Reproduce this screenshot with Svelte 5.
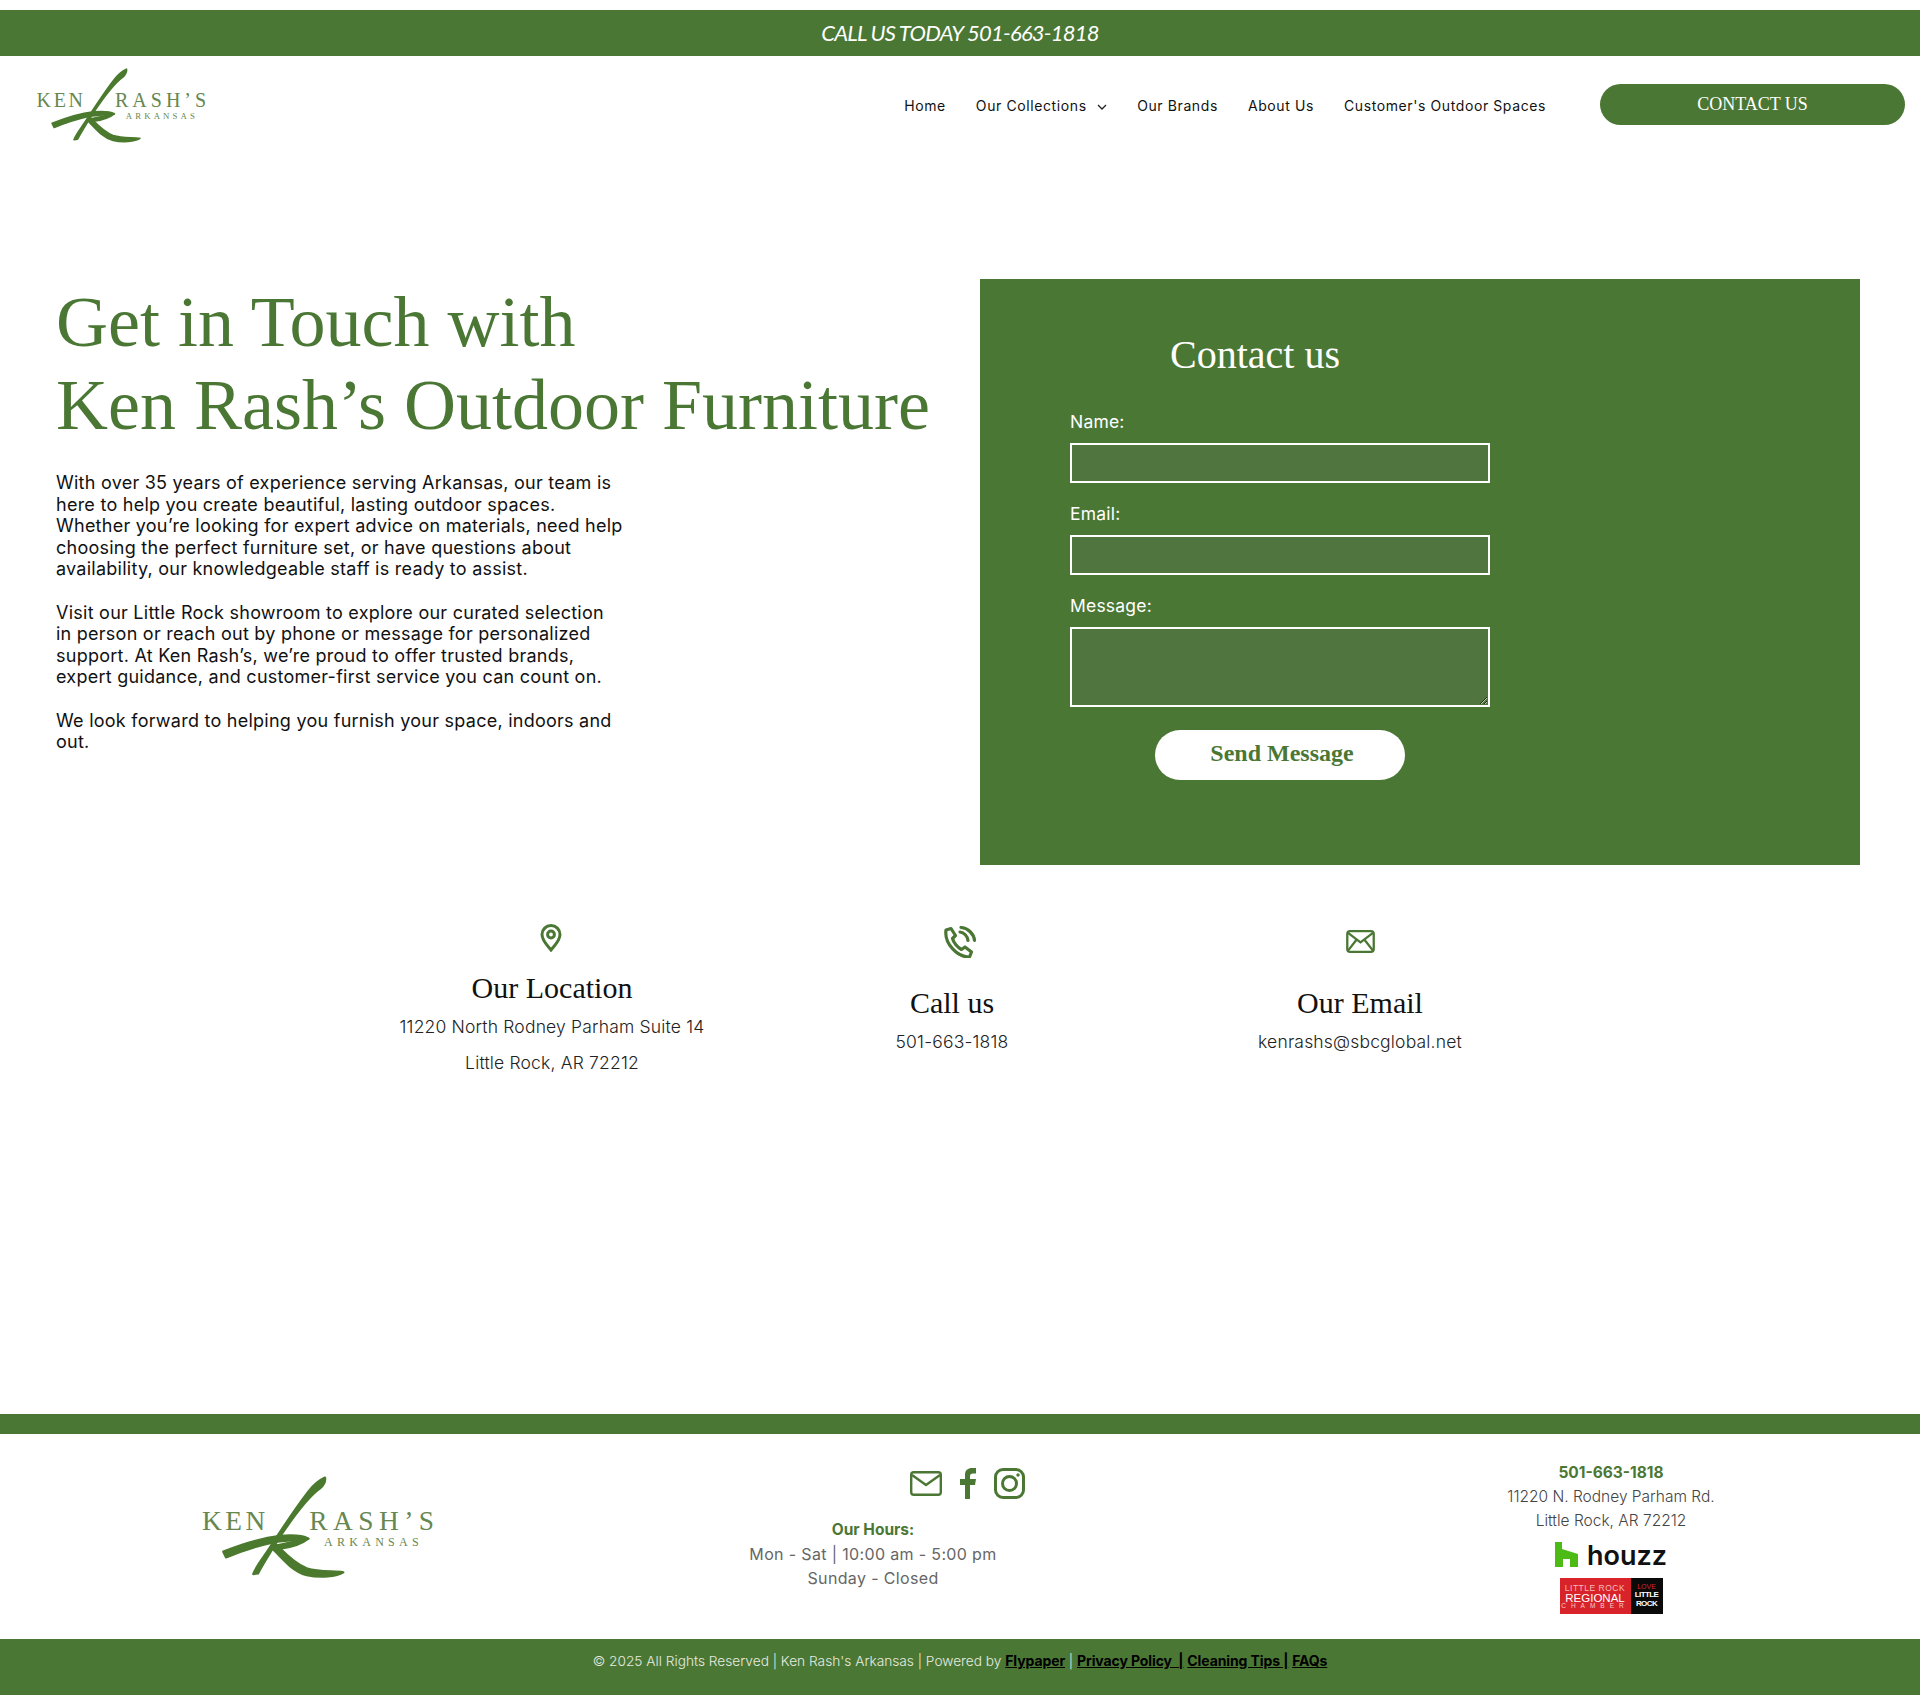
<script>
  const paragraphs = [
    'With over 35 years of experience serving Arkansas, our team is here to help you create beautiful, lasting outdoor spaces. Whether you’re looking for expert advice on materials, need help choosing the perfect furniture set, or have questions about availability, our knowledgeable staff is ready to assist.',
    'Visit our Little Rock showroom to explore our curated selection in\u00a0person or reach out by phone or message for personalized support. At Ken Rash’s, we’re proud to offer trusted brands, expert guidance, and customer-first service you can count on.',
    'We look forward to helping you furnish your space, indoors and out.'
  ]
  const navItems = ['Our Brands', 'About Us', "Customer's Outdoor Spaces"]
</script>

{#snippet logo(cls)}
  <svg class={cls} viewBox="60 78 705 312" role="img" aria-label="Ken Rash's Arkansas">
    <text x="66" y="240" font-size="82" textLength="190" class="logo-text">KEN</text>
    <text x="388" y="240" font-size="82" textLength="374" class="logo-text">RASH’S</text>
    <text x="432" y="287" font-size="36" textLength="284" class="logo-text">ARKANSAS</text>
    <g fill="#4b7a2f" stroke="#4b7a2f" stroke-width="7" stroke-linejoin="round">
      <path d="M435 83C420 90 403 102 385 125C350 170 310 230 265 300C245 330 228 350 220 372L234 370C250 340 275 300 300 260C340 200 385 140 420 115C428 108 437 95 435 83Z" />
      <path d="M130 305C180 285 240 265 300 258C335 255 365 255 385 266C360 272 320 268 280 277C230 288 180 305 138 322Z" />
      <path d="M385 266C365 282 335 292 300 296L285 288Z" />
      <path d="M290 285C310 305 340 340 380 355C420 368 460 362 490 367C470 380 420 384 380 375C340 365 310 330 280 298Z" />
    </g>
  </svg>
{/snippet}

<div class="page">
  <div class="topbar">CALL US TODAY 501-663-1818</div>

  <header>
    {@render logo('logo-small')}
    <nav>
      <a href="#home">Home</a>
      <a href="#collections">Our Collections
        <svg class="caret" viewBox="0 0 10 6"><path d="M1 1l4 4 4-4" fill="none" stroke="#222" stroke-width="1.3" /></svg>
      </a>
      {#each navItems as item}
        <a href="#nav">{item}</a>
      {/each}
    </nav>
    <a class="contact-btn" href="#contact">CONTACT US</a>
  </header>

  <section class="hero">
    <div class="intro">
      <h1>Get in Touch with<br />Ken Rash’s Outdoor Furniture</h1>
      {#each paragraphs as p}
        <p>{p}</p>
      {/each}
    </div>

    <div class="panel">
      <form on:submit|preventDefault>
        <h2>Contact us</h2>
        <label for="name">Name:</label>
        <input id="name" type="text" />
        <label for="email">Email:</label>
        <input id="email" type="email" />
        <label for="message">Message:</label>
        <textarea id="message"></textarea>
        <button type="submit">Send Message</button>
      </form>
    </div>
  </section>

  <section class="info">
    <div class="info-col">
      <svg class="icon pin" viewBox="0 0 22 28" fill="none" stroke="#4b7735" stroke-width="3">
        <path d="M11 26C7 21 2 16.500 2 10.500a9 9 0 0 1 18 0C20 16.500 15 21 11 26Z" />
        <circle cx="11" cy="10.500" r="3.400" />
      </svg>
      <h3>Our Location</h3>
      <p>11220 North Rodney Parham Suite 14</p>
      <p>Little Rock, AR 72212</p>
    </div>
    <div class="info-col lower">
      <svg class="icon phone" viewBox="0 0 34 32" fill="none" stroke="#4b7735" stroke-width="3.200" stroke-linecap="round" stroke-linejoin="round">
        <path d="M3 4L8 2.500l4.500 7-3 3c1 4 5 9 9 11l3.500-2.500 6.500 5-2 5C15 31.500 1 18 3 4Z" />
        <path d="M17 6c4 .5 7.500 4 8 8.500" />
        <path d="M18 1.500C25 2 31 8 31.500 14.500" />
      </svg>
      <h3>Call us</h3>
      <p>501-663-1818</p>
    </div>
    <div class="info-col lower">
      <svg class="icon mail" viewBox="0 0 30 24" fill="none" stroke="#4b7735" stroke-width="2.400" stroke-linejoin="round">
        <rect x="1.200" y="1.200" width="27.600" height="21.600" rx="3" />
        <path d="M2 3l13 10L28 3M2 21.500L11 10M28 21.500L19 10" />
      </svg>
      <h3>Our Email</h3>
      <p>kenrashs@sbcglobal.net</p>
    </div>
  </section>

  <div class="band"></div>

  <footer>
    <div class="foot-logo">
      {@render logo('logo-large')}
    </div>
    <div class="foot-mid">
      <div class="socials">
        <svg class="s-mail" viewBox="0 0 32 25" fill="none" stroke="#4b7735" stroke-width="2.400" stroke-linejoin="round">
          <rect x="1.200" y="1.200" width="29.600" height="22.600" rx="2.500" />
          <path d="M2 4l14 10L30 4" />
        </svg>
        <svg class="s-fb" viewBox="0 0 16 31" fill="#4b7735">
          <path d="M5 31V17H0v-6h5V7c0-5 3-7 7-7h4v5.500h-3c-2 0-3 1-3 2.700V11h6l-1 6h-5v14Z" />
        </svg>
        <svg class="s-ig" viewBox="0 0 31 31" fill="none" stroke="#4b7735" stroke-width="3">
          <rect x="1.500" y="1.500" width="28" height="28" rx="7.500" />
          <circle cx="15.500" cy="15.500" r="7" />
          <circle cx="24" cy="7" r="1.700" fill="#4b7735" stroke="none" />
        </svg>
      </div>
      <div class="hours">
        <strong>Our Hours:</strong>
        <span>Mon - Sat | 10:00 am - 5:00 pm</span>
        <span>Sunday - Closed</span>
      </div>
    </div>
    <div class="foot-right">
      <strong>501-663-1818</strong>
      <span>11220 N. Rodney Parham Rd.</span>
      <span>Little Rock, AR 72212</span>
      <div class="houzz">
        <svg viewBox="0 0 23 25" fill="#4dbb16"><path d="M0 0h7v7l16 5v13h-8v-8H8v8H0Z" /></svg>
        <span>houzz</span>
      </div>
      <div class="chamber">
        <div class="red">
          <small>LITTLE ROCK</small>
          <b>REGIONAL</b>
          <small class="wide">CHAMBER</small>
        </div>
        <div class="black">
          <small class="love">LOVE</small>
          <b>LITTLE</b>
          <b>ROCK</b>
        </div>
      </div>
    </div>
  </footer>

  <div class="legal">
    © 2025 All Rights Reserved | Ken Rash's Arkansas | Powered by <a href="#fp">Flypaper</a> | <a href="#pp">Privacy Policy &nbsp;|</a> <a href="#ct">Cleaning Tips |</a> <a href="#faq">FAQs</a>
  </div>
</div>

<style>
  :global(body) {
    margin: 0;
    background: #fff;
  }

  .page {
    font-family: "Inter", "Open Sans", sans-serif;
    color: #000;
    padding-top: 10px;
  }

  .topbar {
    height: 46px;
    background: #4b7735;
    color: #fff;
    font-family: "Lato", sans-serif;
    font-style: italic;
    font-size: 22px;
    line-height: 46px;
    text-align: center;
    letter-spacing: -0.76px;
  }

  header {
    height: 104px;
    display: flex;
    align-items: center;
    padding: 0 15px 0 35px;
  }

  .logo-small {
    width: 172px;
    height: 76px;
    margin-top: -4px;
  }

  .logo-large {
    width: 235px;
    height: 104px;
    display: block;
  }

  .logo-text {
    font-family: "Liberation Serif", serif;
    fill: #66874f;
  }

  nav {
    margin-left: auto;
    display: flex;
    gap: 30px;
    font-size: 14px;
    letter-spacing: 0.6px;
    margin-top: -5px;
  }

  nav a {
    color: #111;
    text-decoration: none;
  }

  .caret {
    width: 10px;
    height: 6px;
    margin-left: 6px;
    vertical-align: 1px;
  }

  .contact-btn {
    margin-left: 54px;
    width: 305px;
    height: 41px;
    border-radius: 21px;
    background: #4b7735;
    color: #fff;
    font-family: "Liberation Serif", serif;
    font-size: 18px;
    line-height: 41px;
    text-align: center;
    text-decoration: none;
    margin-top: -8px;
  }

  .hero {
    display: flex;
    margin-top: 119px;
    padding: 0 60px 0 56px;
  }

  .intro {
    width: 924px;
    flex: none;
  }

  h1 {
    margin: 0 0 25px;
    padding-top: 2px;
    font-family: "Liberation Serif", serif;
    font-weight: 400;
    font-size: 72px;
    line-height: 83px;
    color: #4b7735;
  }

  .intro p {
    width: 575px;
    margin: 0 0 22px;
    font-size: 18px;
    letter-spacing: 0.25px;
    line-height: 21.500px;
    color: #111;
  }

  .panel {
    flex: 1;
    height: 586px;
    background: #4b7735;
    padding: 0 0 0 90px;
    box-sizing: border-box;
  }

  form {
    width: 420px;
    display: flex;
    flex-direction: column;
  }

  h2 {
    margin: 52px 50px 33px 0;
    font-family: "Liberation Serif", serif;
    font-weight: 400;
    font-size: 40px;
    line-height: 48px;
    text-align: center;
    color: #fff;
  }

  label {
    height: 31px;
    font-size: 17.500px;
    letter-spacing: 0.2px;
    line-height: 20px;
    color: #fff;
  }

  input,
  textarea {
    display: block;
    box-sizing: border-box;
    width: 420px;
    margin: 0 0 21px;
    border: 2px solid #fff;
    background: #50753e;
    padding: 4px;
  }

  input {
    height: 40px;
  }

  textarea {
    height: 80px;
    margin-bottom: 23px;
  }

  button {
    align-self: center;
    width: 250px;
    height: 50px;
    border: 0;
    border-radius: 25px;
    background: #fff;
    color: #4b7735;
    font-family: "Liberation Serif", serif;
    font-weight: 700;
    font-size: 24px;
    padding: 0 0 4px 4px;
  }

  .info {
    display: grid;
    grid-template-columns: 400px 400px 416px;
    padding: 59px 0 0 352px;
    height: 549px;
    box-sizing: border-box;
  }

  .info-col {
    display: flex;
    flex-direction: column;
    align-items: center;
    text-align: center;
  }

  .info-col.lower {
    padding-top: 2px;
  }

  .icon {
    display: block;
  }

  .pin {
    width: 22px;
    height: 28px;
    margin: 0 3px 18px 0;
  }

  .phone {
    width: 34px;
    height: 32px;
    margin: 0 0 27px 16px;
  }

  .mail {
    width: 29px;
    height: 23px;
    margin: 4px 0 32px;
  }

  h3 {
    margin: 0 0 3px;
    font-family: "Liberation Serif", serif;
    font-weight: 400;
    font-size: 30px;
    line-height: 36px;
    color: #111;
  }

  .info-col p {
    margin: 0;
    font-size: 17.500px;
    font-weight: 300;
    letter-spacing: 0.18px;
    line-height: 36px;
    color: #222;
  }

  .band {
    height: 20px;
    background: #4b7735;
  }

  footer {
    height: 205px;
    display: grid;
    grid-template-columns: 200px 235px 380px 300px 1fr;
    font-size: 15.500px;
  }

  .foot-logo {
    grid-column: 2;
    padding-top: 42px;
  }

  .foot-mid {
    grid-column: 3 / 5;
    padding-top: 33px;
  }

  .socials {
    display: flex;
    align-items: center;
    gap: 18px;
    margin-left: 475px;
    height: 33px;
  }

  .s-mail {
    width: 32px;
    height: 25px;
  }

  .s-fb {
    width: 16px;
    height: 31px;
  }

  .s-ig {
    width: 31px;
    height: 31px;
  }

  .hours {
    display: flex;
    flex-direction: column;
    align-items: center;
    width: 500px;
    margin: 18px 0 0 188px;
    font-size: 16px;
    letter-spacing: 0.35px;
    line-height: 24px;
    color: #666;
  }

  .hours strong {
    font-size: 15.500px;
    letter-spacing: 0;
  }

  .hours strong,
  .foot-right strong {
    color: #4b7735;
    font-weight: 700;
  }

  .foot-right {
    grid-column: 5;
    display: flex;
    flex-direction: column;
    align-items: center;
    width: 500px;
    margin-left: 246px;
    padding-top: 27px;
    line-height: 24px;
    color: #444;
    font-weight: 300;
  }

  .houzz {
    display: flex;
    align-items: flex-end;
    gap: 9px;
    height: 25px;
    margin-top: 9px;
  }

  .houzz svg {
    width: 23px;
    height: 25px;
  }

  .houzz span {
    font-family: "Inter", sans-serif;
    font-weight: 600;
    font-size: 27px;
    line-height: 22px;
    color: #111;
  }

  .chamber {
    display: flex;
    width: 103px;
    height: 36px;
    margin-top: 11px;
    color: #fff;
    text-align: center;
    line-height: 1;
  }

  .chamber .red {
    width: 71px;
    background: #d8232a;
    padding-top: 6px;
    box-sizing: border-box;
  }

  .chamber .black {
    flex: 1;
    background: #0a0a0a;
    padding-top: 5px;
    box-sizing: border-box;
  }

  .chamber small,
  .chamber b {
    display: block;
    font-family: "Liberation Sans", sans-serif;
    font-size: 8.500px;
    letter-spacing: 0.5px;
    font-weight: 400;
    white-space: nowrap;
  }

  .red small {
    color: #f5bcbc;
  }

  .red b {
    font-size: 11.500px;
    letter-spacing: 0;
    line-height: 10px;
  }

  .red .wide {
    letter-spacing: 5px;
    font-size: 6.500px;
    color: #f7c9c9;
  }

  .black b {
    font-size: 8px;
    font-weight: 700;
    letter-spacing: -0.6px;
    line-height: 9px;
  }

  .black .love {
    color: #d8232a;
    font-size: 7px;
    letter-spacing: 0;
  }

  .legal {
    height: 56px;
    background: #4b7735;
    color: #e6ece0;
    font-size: 13.700px;
    font-weight: 300;
    line-height: 44px;
    text-align: center;
  }

  .legal a {
    color: #000;
    font-size: 14px;
    font-weight: 700;
    letter-spacing: -0.1px;
  }
</style>
